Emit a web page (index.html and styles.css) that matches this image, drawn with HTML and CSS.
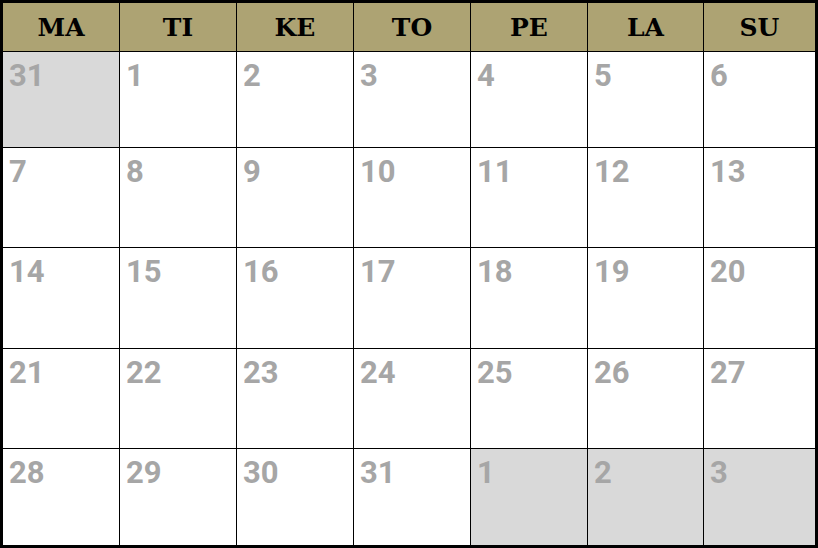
FILE: index.html
```html
<!DOCTYPE html>
<html>
<head>
<meta charset="utf-8">
<link rel="stylesheet" href="styles.css">
</head>
<body>
<table class="cal">
  <colgroup>
    <col class="c-first"><col class="c-mid"><col class="c-mid"><col class="c-mid"><col class="c-mid"><col class="c-six"><col>
  </colgroup>
  <thead>
    <tr class="head">
      <th>MA</th><th>TI</th><th>KE</th><th>TO</th><th>PE</th><th>LA</th><th>SU</th>
    </tr>
  </thead>
  <tbody>
    <tr class="r1">
      <td class="out">31</td><td>1</td><td>2</td><td>3</td><td>4</td><td>5</td><td>6</td>
    </tr>
    <tr class="r">
      <td>7</td><td>8</td><td>9</td><td>10</td><td>11</td><td>12</td><td>13</td>
    </tr>
    <tr class="r r-tall">
      <td>14</td><td>15</td><td>16</td><td>17</td><td>18</td><td>19</td><td>20</td>
    </tr>
    <tr class="r">
      <td>21</td><td>22</td><td>23</td><td>24</td><td>25</td><td>26</td><td>27</td>
    </tr>
    <tr class="r-last">
      <td>28</td><td>29</td><td>30</td><td>31</td><td class="out">1</td><td class="out">2</td><td class="out">3</td>
    </tr>
  </tbody>
</table>
</body>
</html>
```
FILE: styles.css
```css
html, body {
  margin: 0;
  padding: 0;
  background: #fff;
}
.cal {
  width: 818px;
  border-collapse: collapse;
  table-layout: fixed;
  border: 3px solid #000;
}
.c-first { width: 118px; }
.c-mid { width: 117px; }
.c-six { width: 116px; }
.cal th, .cal td {
  border: 1px solid #000;
  padding: 0;
}
.head th {
  height: 48px;
  background: #ada373;
  color: #000;
  font-family: "DejaVu Serif", serif;
  font-weight: bold;
  font-size: 25px;
  text-align: center;
  vertical-align: middle;
}
.cal td {
  vertical-align: top;
  text-align: left;
  font-family: Roboto, "Liberation Sans", sans-serif;
  font-weight: 700;
  font-size: 31px;
  line-height: 1;
  color: #a6a6a6;
  padding: 8px 0 0 6px;
}
.r1 td { height: 87px; }
.r td { height: 91px; }
.r-tall td { height: 92px; }
.r-last td { height: 88px; }
.cal td.out {
  background: #d9d9d9;
}
```
